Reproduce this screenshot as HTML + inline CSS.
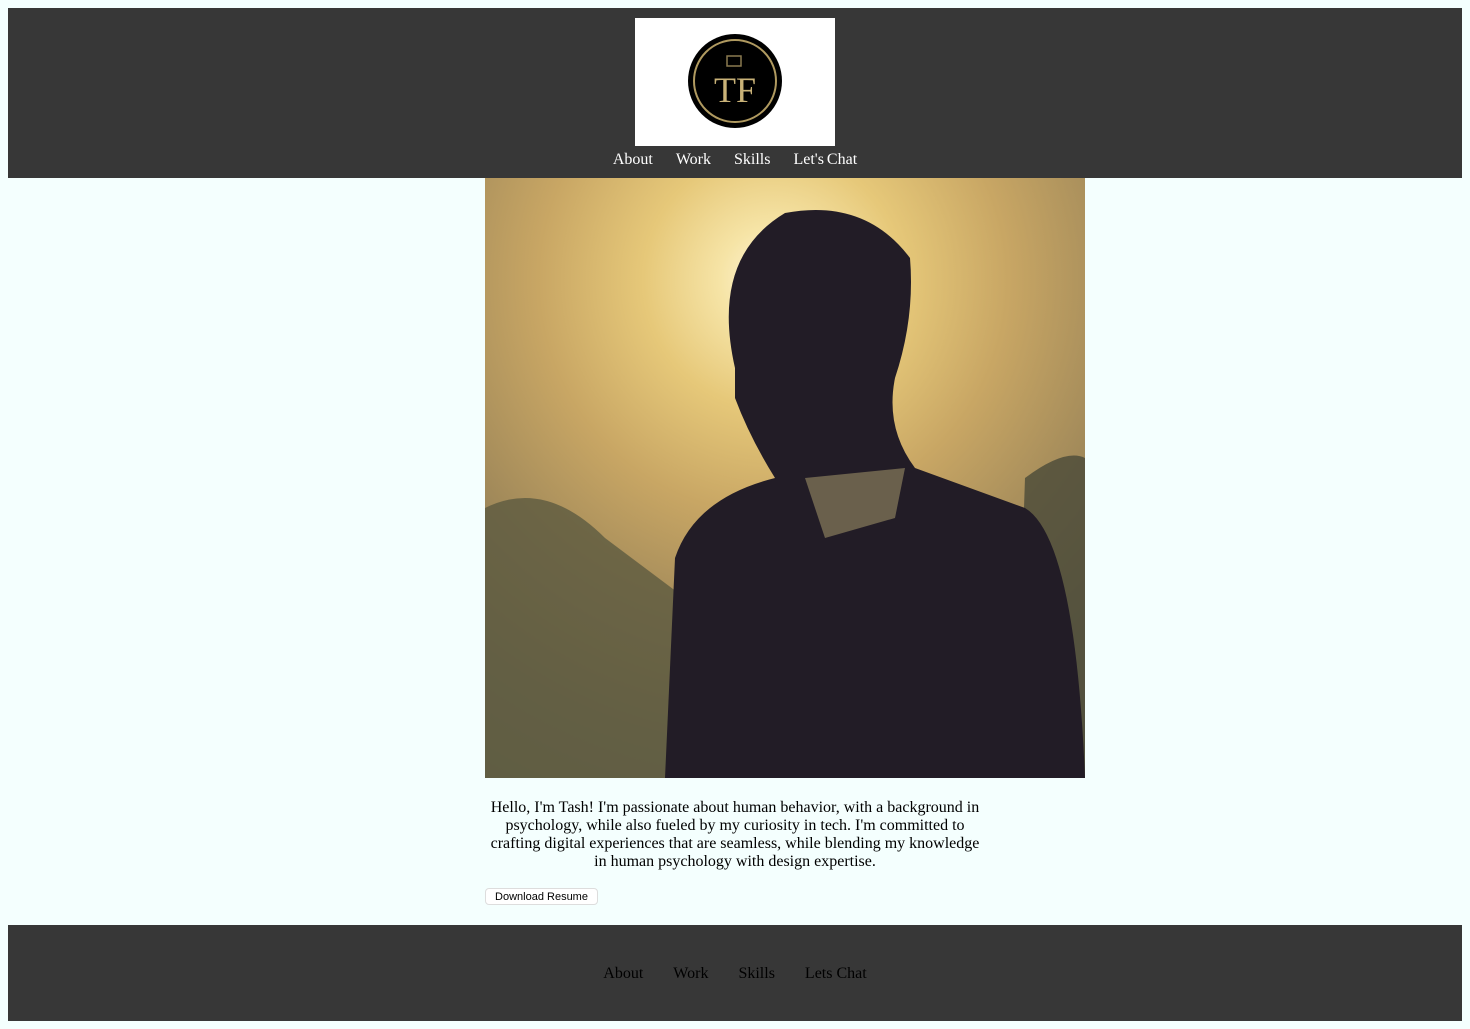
<!DOCTYPE html>
<html><head><meta charset="utf-8"><style>
body{margin:8px;background:#f4fffe;font-family:"Liberation Serif",serif;font-size:16px;color:#000}
header{background:#373737;height:170px;position:relative}
.logo{position:absolute;left:627px;top:10px;width:200px;height:128px;background:#fff}
nav.top{position:absolute;top:143px;left:0;width:100%;text-align:center;color:#fff;font-size:16px;word-spacing:-1px}
nav.top span{margin:0 11.5px}
.photo{position:absolute;left:485px;top:178px;width:600px;height:600px;overflow:hidden;
background:radial-gradient(circle at 48% 17%,#fff6d8 0,#f6e4a6 9%,#e6c879 22%,#c8a664 40%,#a28a5a 60%,#7e7456 80%,#6b6a50 100%)}
.txt{position:absolute;left:485px;top:799px;width:500px;text-align:center;line-height:18px}
button{position:absolute;left:485px;top:888px;font-family:"Liberation Sans",sans-serif;font-size:11px;background:#fff;border:1px solid #ddd;border-radius:4px;padding:2px 7px;height:17px;width:113px}
footer{position:absolute;left:8px;top:925px;width:1454px;height:96px;background:#373737;text-align:center}
footer div{padding-top:40px}
footer span{margin:0 15px;color:#000}
</style></head><body>
<header>
<div class="logo"><svg width="200" height="128"><circle cx="100" cy="63" r="47" fill="#000"/><circle cx="100" cy="63" r="41" fill="none" stroke="#b09a60" stroke-width="2"/><rect x="92" y="38" width="14" height="10" fill="none" stroke="#8a7a50" stroke-width="1.5"/><text x="100" y="84" text-anchor="middle" font-family="Liberation Serif" font-size="36" fill="#c9b278">TF</text></svg></div>
<nav class="top"><span>About</span><span>Work</span><span>Skills</span><span>Let's Chat</span></nav>
</header>
<div class="photo"><svg width="600" height="600">
<path d="M0 330 Q60 300 120 360 L200 420 L200 600 L0 600Z" fill="#5c5a40" opacity=".8"/>
<path d="M540 300 Q580 270 600 280 L600 600 L530 600Z" fill="#4a4a38" opacity=".8"/>
<path d="M250 190 Q225 80 300 35 Q380 20 425 80 Q430 140 410 200 Q400 250 430 290 L540 330 Q590 360 600 600 L180 600 L190 380 Q210 320 290 300 Q265 260 250 220Z" fill="#221c26"/>
<path d="M320 300 L420 290 L410 340 L340 360Z" fill="#6a604c"/>
</svg></div>
<div class="txt">Hello, I'm Tash! I'm passionate about human behavior, with a background in psychology, while also fueled by my curiosity in tech. I'm committed to crafting digital experiences that are seamless, while blending my knowledge in human psychology with design expertise.</div>
<button>Download Resume</button>
<footer><div><span>About</span><span>Work</span><span>Skills</span><span>Lets Chat</span></div></footer>
</body></html>
